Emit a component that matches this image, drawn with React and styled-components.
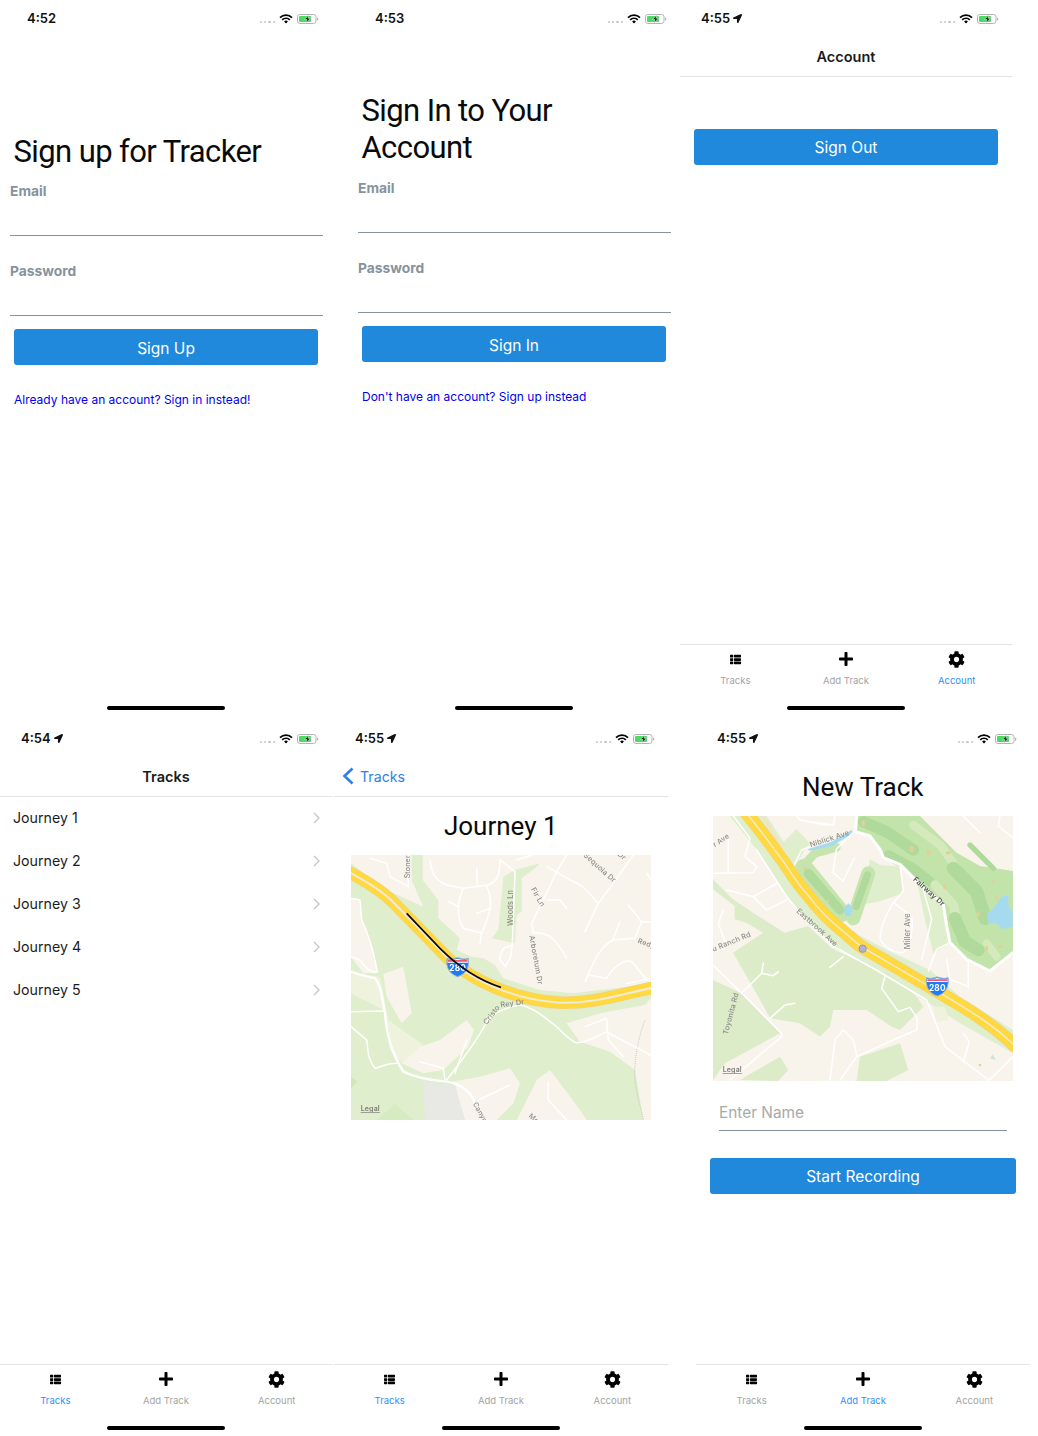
import React from 'react';
import styled, { createGlobalStyle } from 'styled-components';
import { FaThList, FaPlus, FaCog, FaLocationArrow } from 'react-icons/fa';

const GlobalStyle = createGlobalStyle`
  html, body {
    margin: 0;
    padding: 0;
    background: #fff;
  }
  body {
    font-family: Inter, "Liberation Sans", sans-serif;
    color: #000;
    overflow: hidden;
  }
`;

const Page = styled.div`
  width: 1038px;
  height: 1436px;
  display: flex;
  flex-direction: column;
  gap: 4px;
`;

const Row = styled.div`
  display: flex;
  align-items: flex-start;
`;

const Phone = styled.div`
  width: ${(p) => p.$width}px;
  height: 716px;
  margin-left: ${(p) => p.$left || 0}px;
  display: flex;
  flex-direction: column;
  flex-shrink: 0;
`;

const Body = styled.div`
  flex: 1;
  display: flex;
  flex-direction: column;
  min-height: 0;
`;

/* status bar */
const StatusBar = styled.div`
  height: 36px;
  display: flex;
  align-items: center;
  justify-content: space-between;
  padding: 0 13px 0 ${(p) => p.$left}px;
  flex-shrink: 0;
`;

const Time = styled.div`
  display: flex;
  align-items: center;
  gap: 3px;
  font-size: 13px;
  font-weight: 600;
  color: #111;
`;

const StatusIcons = styled.div`
  display: flex;
  align-items: center;
  margin-top: 1px;
`;

const Dots = styled.div`
  display: flex;
  gap: 1.800px;
  margin: 7px 4px 0 0;
`;

const Dot = styled.span`
  width: 2.500px;
  height: 2.500px;
  border-radius: 50%;
  background: #c4c4c4;
`;

const Wifi = () => (
  <svg width="14" height="10" viewBox="0 0 14 10" style={{ marginRight: 4 }}>
    <path d="M1 3.6a8.6 8.6 0 0 1 12 0" fill="none" stroke="#000" strokeWidth="1.700" />
    <path d="M3.2 5.8a5.400 5.400 0 0 1 7.600 0" fill="none" stroke="#000" strokeWidth="1.700" />
    <path d="M5.100 7.500a2.700 2.700 0 0 1 3.800 0L7 9.600z" fill="#000" />
  </svg>
);

const Battery = () => (
  <svg width="22" height="10" viewBox="0 0 22 10">
    <rect x="0.500" y="0.500" width="18.500" height="9" rx="2.400" fill="#fff" stroke="#b4b4b4" />
    <rect x="2" y="2" width="12" height="6" rx="1" fill="#4cd964" />
    <path d="M20 3.400c1 .2 1.400.8 1.400 1.600s-.4 1.400-1.400 1.600z" fill="#b5b5b5" />
    <path d="M11.800 0.800L7.700 5.600h2.300l-.9 3.600 4.200-5h-2.400z" fill="#111" stroke="#fff" strokeWidth="0.500" />
  </svg>
);

const Status = ({ time, located, left }) => (
  <StatusBar $left={left}>
    <Time>
      {time}
      {located && <FaLocationArrow size={9} />}
    </Time>
    <StatusIcons>
      <Dots>
        <Dot />
        <Dot />
        <Dot />
        <Dot />
      </Dots>
      <Wifi />
      <Battery />
    </StatusIcons>
  </StatusBar>
);

/* nav header */
const Header = styled.div`
  height: 40px;
  display: flex;
  align-items: center;
  justify-content: ${(p) => (p.$back ? 'flex-start' : 'center')};
  border-bottom: 1px solid #e4e4e4;
  flex-shrink: 0;
`;

const HeaderTitle = styled.div`
  font-size: 14.500px;
  font-weight: 600;
  color: #1a1a1a;
`;

const BackLink = styled.div`
  display: flex;
  align-items: center;
  gap: 6px;
  margin-left: 8px;
  font-size: 14.200px;
  color: #2f7fe8;
`;

/* forms */
const Title = styled.div`
  margin: ${(p) => p.$top}px 14px ${(p) => p.$bottom || 0}px 13.500px;
  font-family: Roboto, Inter, sans-serif;
  font-size: ${(p) => p.$size || 31}px;
  line-height: 37px;
  letter-spacing: ${(p) => (p.$center ? 0 : -0.6)}px;
  text-align: ${(p) => (p.$center ? 'center' : 'left')};
  color: #0a0a0a;
`;

const Field = styled.div`
  box-sizing: border-box;
  height: 54px;
  margin: 0 9px 26px 10px;
  border-bottom: 1px solid #86939e;
`;

const Label = styled.div`
  font-size: 13.800px;
  line-height: 18px;
  font-weight: 700;
  color: #86939e;
`;

const Button = styled.div`
  box-sizing: border-box;
  height: 36px;
  margin: ${(p) => p.$top}px 14px 0;
  padding-top: ${(p) => p.$nudge || 0}px;
  display: flex;
  align-items: center;
  justify-content: center;
  background: #2089dc;
  border-radius: 3px;
  color: #fff;
  font-size: 15.500px;
`;

const TextLink = styled.div`
  margin: 26px 14px 0;
  font-size: 12px;
  line-height: 18px;
  color: #0000ee;
`;

const NameInput = styled.div`
  height: 35px;
  margin: 15px 23px 27px;
  box-sizing: border-box;
  padding-top: 7px;
  border-bottom: 1px solid #86939e;
  font-size: 15.400px;
  line-height: 20px;
  color: #a9a9a9;
`;

/* list */
const ListRow = styled.div`
  box-sizing: border-box;
  height: 43px;
  display: flex;
  align-items: center;
  justify-content: space-between;
  padding: 0 12px 2px 13px;
  font-size: 14.200px;
  color: #1c1c1c;
`;

const Chevron = () => (
  <svg width="7" height="12" viewBox="0 0 7 12">
    <path d="M1 1l5 5-5 5" fill="none" stroke="#c5c5c8" strokeWidth="1.300" />
  </svg>
);

/* maps */
const MapFrame = styled.svg`
  display: block;
  width: 300px;
  height: 265px;
  margin-left: 17px;
  flex-shrink: 0;
  background: #f8f4ec;
  filter: blur(0.35px);
`;

const Road = styled.path`
  fill: none;
  stroke: #fff;
  stroke-width: ${(p) => p.$w || 4.500}px;
  stroke-linecap: round;
  stroke-linejoin: round;
`;

const Fairway = styled.path`
  fill: none;
  stroke: ${(p) => p.$color || '#b0da9c'};
  stroke-width: ${(p) => p.$w || 26}px;
  stroke-linecap: round;
  stroke-linejoin: round;
`;

const MapText = styled.text`
  font-family: Inter, "Liberation Sans", sans-serif;
  font-size: ${(p) => p.$size || 21}px;
  font-weight: ${(p) => p.$weight || 500};
  fill: ${(p) => p.$color || '#8c8c88'};
  letter-spacing: 0.500px;
`;

const HIGHWAY_A =
  'M20,62 C70,90 125,120 165,162 L325,326 C400,392 520,450 660,458 C760,462 850,430 945,412';
const HIGHWAY_B =
  'M130,-5 L146,18 C190,70 220,115 249,153 C275,190 295,225 322,253 C350,290 385,328 417,353 C445,375 465,398 489,413 L680,525 C770,580 860,625 950,712';

const Highway = ({ d, width, stripe }) => (
  <g fill="none">
    <path d={d} stroke="#f4cf83" strokeWidth={width + 4} />
    <path d={d} stroke="#ffd93d" strokeWidth={width} />
    <path d={d} stroke="#efeadb" strokeWidth={stripe} />
  </g>
);

const Shield = ({ x, y }) => (
  <g transform={`translate(${x} ${y})`}>
    <path
      d="M2 3 C14 8 24 3 34 1 C44 3 54 8 66 3 C70 28 60 50 34 58 C8 50 -2 28 2 3z"
      fill="#1f7bf2"
      stroke="#9bb0d0"
      strokeWidth="3"
    />
    <path d="M4 6 C14 10 24 6 34 4 C44 6 54 10 64 6 L65 16 L3 16z" fill="#fff" />
    <path d="M5 8 L63 8 L64 13 L4 13z" fill="#f0566a" />
    <MapText x="34" y="42" $size={25} $weight={700} $color="#fff" textAnchor="middle">
      280
    </MapText>
  </g>
);

const JourneyMap = () => (
  <MapFrame viewBox="33 15 900 795">
    <path
      d="M215,15 L248,15 L248,90 L295,150 L295,205 L360,265 L350,300 L395,320 L430,325 L465,345 L490,385 L600,420 L700,430 L860,410 L933,395 L933,445 L915,465 L780,490 L680,520 L720,575 L810,605 L885,660 L910,810 L33,810 L33,40 L130,115 L205,150 L250,170 L215,90z"
      fill="#dfeecd"
    />
    <path d="M490,80 L525,60 L600,40 L585,55 L545,85 L545,185 L530,195 L525,280 L455,265 L475,240z" fill="#dfeecd" />
    <path d="M33,145 L60,150 L65,210 L100,300 L115,370 L70,370 L33,320z" fill="#f8f4ec" />
    <path d="M33,370 L120,380 L145,510 L250,585 L185,640 L150,600 L130,480 L33,430z" fill="#eff2dd" />
    <path d="M130,372 L190,350 L215,490 L185,520 L140,440z" fill="#f8f4ec" />
    <path d="M185,640 L240,590 L300,570 L380,510 L402,540 L385,590 L310,660 L250,670z" fill="#f8f4ec" />
    <path d="M335,695 L420,680 L510,655 L540,700 L520,760 L470,810 L375,810z" fill="#f8f4ec" />
    <path d="M530,810 L590,690 L630,660 L660,700 L720,780 L740,810z" fill="#f8f4ec" />
    <path d="M250,695 L345,705 L375,810 L255,810z" fill="#e8e8e4" />
    <path d="M33,680 L52,695 L33,715z" fill="#cfe8b6" />
    <path d="M110,810 L165,762 L220,810z" fill="#d7ebc2" />
    <path
      d="M915,510 C895,560 880,640 885,690 C890,740 905,780 910,810"
      fill="none"
      stroke="#b5b5ae"
      strokeWidth="2"
      strokeDasharray="3 3"
    />

    <Road d="M33,365 C60,375 85,380 105,385 C125,410 125,440 135,490 C140,550 150,600 190,665 C220,680 260,690 320,695 C350,700 390,715 405,760" $w={7} />
    <Road d="M33,530 L80,570 C85,610 85,630 105,655 C125,650 135,640 170,640" />
    <Road d="M33,485 L135,483" />
    <Road d="M33,145 L60,150 L65,210 C85,250 100,300 112,365 C90,372 70,345 60,330 L33,320" />
    <Road d="M320,690 C350,650 400,590 435,525 C450,495 480,475 540,465 C570,470 600,490 650,530 C680,560 700,578 710,578 C740,578 770,560 800,545 C840,570 890,590 930,615" />
    <Road d="M240,635 L310,655 L315,690" />
    <Road d="M345,670 L380,570" />
    <Road d="M415,750 L510,705" />
    <Road d="M625,695 L625,750 L680,810" />
    <Road d="M800,510 L805,570 L850,620" />
    <Road d="M735,530 L800,505" />
    <Road d="M90,25 L140,40 L150,80 L205,110 L205,15" />
    <Road d="M270,30 C275,70 285,90 320,105 L370,115 L445,105 C470,95 480,75 480,30 M410,55 L412,105" />
    <Road d="M370,115 C355,150 345,190 370,235 L425,250 C445,200 465,160 440,110 M325,155 L355,170 M410,190 L450,175 M425,250 L420,280" />
    <Road d="M480,30 L525,65 L517,285 L490,295 L478,325 L495,350 L512,320 L517,285" />
    <Road d="M530,30 L590,10 M680,15 L650,65 C630,110 610,150 575,220 L580,250 C610,245 640,250 680,325 M620,50 L700,95 C720,100 735,115 775,160 L735,245 M775,160 L820,100 L880,15 M620,150 L660,150 L680,175" />
    <Road d="M865,165 L905,215 L933,215 M905,215 L885,265 L820,270 C790,285 770,310 735,395 L745,375 L800,385 C820,350 860,320 880,340 L920,390 M840,215 L818,270 M920,70 L933,90" />
    <Road d="M860,400 L933,385" $w={4} />

    <Highway d={HIGHWAY_A} width={34} stripe={6} />
    <Shield x={319} y={322} />
    <path d="M200,190 L300,295 C345,340 400,385 483,412" fill="none" stroke="#0a0a0a" strokeWidth="5" />

    <MapText transform="translate(210 85) rotate(-90)">Stoner</MapText>
    <MapText transform="translate(518 228) rotate(-90)" $size={22}>Woods Ln</MapText>
    <MapText transform="translate(572 118) rotate(60)" $size={22}>Fir Ln</MapText>
    <MapText transform="translate(568 258) rotate(80)" $size={22}>Arboretum Dr</MapText>
    <MapText transform="translate(730 18) rotate(42)" $size={22}>Sequoia Dr</MapText>
    <MapText transform="translate(832 15) rotate(42)">Dr</MapText>
    <MapText transform="translate(892 278) rotate(20)">Redy</MapText>
    <MapText transform="translate(440 525) rotate(-52)" $size={22}>Cristo</MapText>
    <MapText transform="translate(482 472) rotate(-8)" $size={22}>Rey Dr</MapText>
    <MapText transform="translate(398 762) rotate(60)">Canyo</MapText>
    <MapText transform="translate(565 800) rotate(40)">Mo</MapText>
    <MapText x="62" y="783" $weight={600} $color="#7d7d7a" textDecoration="underline">
      Legal
    </MapText>
  </MapFrame>
);

const NewTrackMap = () => (
  <MapFrame viewBox="39 18 900 795">
    <path d="M89,18 L200,18 L300,170 L340,240 L440,355 L560,420 L690,480 L780,560 L939,660 L939,730 L780,640 L680,575 L534,483 L399,408 L299,308 L259,258 L169,118z" fill="#dfeecd" />
    <path d="M239,108 L289,58 L329,98 L284,168z" fill="#dfeecd" />
    <path d="M39,208 L99,268 L159,308 L254,368 L324,348 L394,413 L534,483 L570,490 L650,560 L670,590 L600,660 L575,650 L500,600 L400,600 L390,650 L360,680 L300,640 L210,625 L175,560 L99,428 L189,368 L139,338 L104,328 L104,288 L39,238z" fill="#dcecc9" />
    <path d="M39,510 L125,550 L240,670 L75,760 L39,810z" fill="#dcecc9" />
    <path d="M480,740 L600,700 L625,780 L560,813 L470,813z" fill="#dcecc9" />
    <path d="M120,810 L240,740 L265,780 L235,813z" fill="#dcecc9" />
    <path d="M700,590 L735,590 L745,630 L710,635z" fill="#eff2dd" />
    <path d="M510,148 L540,165 L600,170 L610,250 L535,275 L480,285z" fill="#dfeecd" />
    <path d="M650,208 L730,288 L750,400 L700,430 L675,330z" fill="#dfeecd" />

    <path
      d="M466,18 L465,65 L510,78 L540,118 L550,143 L600,163 L640,203 L730,283 L740,348 L750,398 L800,448 L870,483 L939,428 L939,183 L840,168 L770,128 L710,68 L660,18z"
      fill="#c2e3aa"
    />
    <Fairway d="M490,35 L560,65 L640,120" $w={34} />
    <Fairway d="M640,45 L720,105 L775,180" $color="#d4e9bc" $w={26} />
    <Fairway d="M565,135 L640,175 L690,215" $w={30} />
    <Fairway d="M760,175 L830,245 L855,325" $w={40} />
    <Fairway d="M705,225 L760,285 L780,370" $color="#d4e9bc" $w={28} />
    <Fairway d="M765,325 L795,395 L835,420" $w={38} />
    <Fairway d="M810,105 L880,175" $w={16} />
    <Fairway d="M860,400 L890,440" $color="#d4e9bc" $w={24} />

    <Fairway d="M312,172 L425,310" $color="#c6e5ae" $w={52} />
    <Fairway d="M505,190 L460,325" $color="#c6e5ae" $w={42} />
    <Fairway d="M312,165 L345,130 L409,112" $color="#c6e5ae" $w={26} />
    <Fairway d="M325,190 L420,300" $w={28} />
    <Fairway d="M502,195 L468,290" $w={22} />
    <path d="M433,295 L445,280 L458,295 L452,318 L435,318z" fill="#a6dbef" />
    <path d="M905,260 L925,255 L925,285 L938,310 L938,350 L905,358 L890,340 L865,340 L862,310 L880,295z" fill="#a6dbef" />
    <path d="M322,118 L395,95 L455,60 L460,70 L395,108 L330,122z" fill="#a6dbef" />

    <g fill="#e4cf97">
      <ellipse cx="490" cy="40" rx="5" ry="9" />
      <ellipse cx="635" cy="118" rx="6" ry="10" />
      <ellipse cx="685" cy="128" rx="6" ry="9" />
      <ellipse cx="745" cy="128" rx="8" ry="5" />
      <ellipse cx="735" cy="230" rx="5" ry="8" />
      <ellipse cx="835" cy="312" rx="5" ry="9" />
      <ellipse cx="890" cy="265" rx="4" ry="7" />
      <ellipse cx="860" cy="415" rx="5" ry="8" />
      <ellipse cx="900" cy="410" rx="7" ry="5" />
      <ellipse cx="315" cy="175" rx="6" ry="4" />
      <ellipse cx="383" cy="272" rx="4" ry="5" />
      <ellipse cx="880" cy="215" rx="4" ry="5" />
      <ellipse cx="840" cy="765" rx="4" ry="4" />
    </g>
    <path d="M870,745 L878,733 L888,750z" fill="#d2e3de" />

    <Road d="M470,18 L466,65 L510,78 L540,118 L550,143 L600,163 L640,203 L730,283 L740,348 L750,398 L800,448 L870,483 L939,428" $w={9} />
    <Road d="M600,163 L610,243 L580,278 C555,320 540,360 540,388 C560,420 590,428 610,428 C635,400 640,350 635,318 L580,278" />
    <Road d="M670,238 L695,328 L665,448" />
    <Road d="M750,398 L710,418 L685,483" />
    <Road d="M740,448 L750,508 L805,530 L805,448" />
    <Road d="M330,35 L400,45 L405,18 M459,68 L409,118 L399,188 L429,213 L464,143" />
    <Road d="M100,18 L150,85 L135,140 L170,170 L160,188 L39,190 M85,90 L85,188" />
    <Road d="M169,118 L259,258 L299,308 L399,408 L534,483 L680,570 L735,710 L865,810" />
    <Road d="M80,240 L160,260 L200,300 L260,270 M160,260 L230,220" />
    <Road d="M39,465 L125,550 L245,670 L245,680 L90,810" />
    <Road d="M125,550 L185,490 L190,460 M185,490 L220,497 L235,485" />
    <Road d="M210,625 L255,585 L285,580" />
    <Road d="M70,300 L55,340 L75,395" />
    <Road d="M390,472 L430,440" />
    <Road d="M555,500 L545,535 L595,605 L630,592 L652,625 L650,660 L580,690 L470,740 L420,810" />
    <Road d="M470,735 L460,690 L430,660 L405,690 L390,810" />
    <Road d="M790,670 L808,695 L790,755" />
    <Road d="M900,18 L895,48 L939,83 M790,18 L840,68 M865,813 L939,740" />
    <Road d="M290,18 L300,30 L380,45 M280,170 L305,120 L330,110" />

    <path d="M189,18 L259,138" fill="none" stroke="#fbe0b4" strokeWidth="5" />
    <Highway d={HIGHWAY_B} width={36} stripe={4} />
    <circle cx="488" cy="416" r="11" fill="#b4b0cf" stroke="#8794e2" strokeWidth="3" />
    <Shield x={678} y={500} />

    <MapText transform="translate(45 112) rotate(-35)">r Ave</MapText>
    <MapText transform="translate(332 112) rotate(-18)" $size={22}>Niblick Ave</MapText>
    <MapText transform="translate(638 210) rotate(42)" $weight={600} $color="#55554f" $size={22}>
      Fairway Dr
    </MapText>
    <MapText transform="translate(630 418) rotate(-90)" $size={22}>Miller Ave</MapText>
    <MapText transform="translate(288 305) rotate(42)" $size={22}>Eastbrook Ave</MapText>
    <MapText transform="translate(40 425) rotate(-22)" $size={22}>u Ranch Rd</MapText>
    <MapText transform="translate(83 675) rotate(-75)" $size={22}>Toyonita Rd</MapText>
    <MapText x="68" y="786" $weight={600} $color="#7d7d7a" textDecoration="underline">
      Legal
    </MapText>
  </MapFrame>
);

/* tab bar */
const TabBar = styled.div`
  height: 62px;
  box-sizing: border-box;
  border-top: 1px solid #e4e4e4;
  display: flex;
  flex-shrink: 0;
`;

const Tab = styled.div`
  flex: 1;
  display: flex;
  flex-direction: column;
  align-items: center;
  color: ${(p) => (p.$active ? '#2f8ffb' : '#a3a3a3')};
  font-size: 9.500px;
  line-height: 12px;
`;

const TabIcon = styled.div`
  height: 28px;
  margin-bottom: 2px;
  display: flex;
  align-items: center;
  color: #000;
`;

const HomeRow = styled.div`
  height: 10px;
  display: flex;
  justify-content: center;
  align-items: flex-start;
  flex-shrink: 0;
`;

const HomeBar = styled.div`
  width: 118px;
  height: 4px;
  border-radius: 2px;
  background: #000;
`;

const Tabs = ({ active }) => (
  <TabBar>
    <Tab $active={active === 'tracks'}>
      <TabIcon>
        <FaThList size={11} />
      </TabIcon>
      Tracks
    </Tab>
    <Tab $active={active === 'add'}>
      <TabIcon>
        <FaPlus size={16} />
      </TabIcon>
      Add Track
    </Tab>
    <Tab $active={active === 'account'}>
      <TabIcon>
        <FaCog size={17} />
      </TabIcon>
      Account
    </Tab>
  </TabBar>
);

const Home = () => (
  <HomeRow>
    <HomeBar />
  </HomeRow>
);

const AuthForm = ({ titleLines, top, bottom, button, link }) => (
  <Body>
    <Title $top={top} $bottom={bottom}>
      {titleLines.map((line) => (
        <div key={line}>{line}</div>
      ))}
    </Title>
    <Field>
      <Label>Email</Label>
    </Field>
    <Field>
      <Label>Password</Label>
    </Field>
    <Button $top={-13} $nudge={2}>{button}</Button>
    <TextLink>{link}</TextLink>
  </Body>
);

const journeys = ['Journey 1', 'Journey 2', 'Journey 3', 'Journey 4', 'Journey 5'];

export default function App() {
  return (
    <Page>
      <GlobalStyle />
      <Row>
        <Phone $width={332}>
          <Status time="4:52" left={27} />
          <AuthForm
            titleLines={['Sign up for Tracker']}
            top={97}
            bottom={12}
            button="Sign Up"
            link="Already have an account? Sign in instead!"
          />
          <Home />
        </Phone>
        <Phone $width={332} $left={16}>
          <Status time="4:53" left={27} />
          <AuthForm
            titleLines={['Sign In to Your', 'Account']}
            top={56}
            bottom={13}
            button="Sign In"
            link="Don't have an account? Sign up instead"
          />
          <Home />
        </Phone>
        <Phone $width={332}>
          <Status time="4:55" located left={21} />
          <Header>
            <HeaderTitle>Account</HeaderTitle>
          </Header>
          <Body>
            <Button $top={52}>Sign Out</Button>
          </Body>
          <Tabs active="account" />
          <Home />
        </Phone>
      </Row>
      <Row>
        <Phone $width={332}>
          <Status time="4:54" located left={21} />
          <Header>
            <HeaderTitle>Tracks</HeaderTitle>
          </Header>
          <Body>
            {journeys.map((name) => (
              <ListRow key={name}>
                {name}
                <Chevron />
              </ListRow>
            ))}
          </Body>
          <Tabs active="tracks" />
          <Home />
        </Phone>
        <Phone $width={334} $left={2}>
          <Status time="4:55" located left={21} />
          <Header $back>
            <BackLink>
              <svg width="12" height="18" viewBox="0 0 12 18">
                <path d="M10.500 1.500L2.500 9l8 7.500" fill="none" stroke="#2f7fe8" strokeWidth="2.600" />
              </svg>
              Tracks
            </BackLink>
          </Header>
          <Body>
            <Title $top={11} $bottom={10} $size={26} $center>
              Journey 1
            </Title>
            <JourneyMap />
          </Body>
          <Tabs active="tracks" />
          <Home />
        </Phone>
        <Phone $width={334} $left={28}>
          <Status time="4:55" located left={21} />
          <Body>
            <Title $top={13} $bottom={10} $size={26} $center>
              New Track
            </Title>
            <NewTrackMap />
            <NameInput>Enter Name</NameInput>
            <Button $top={0}>Start Recording</Button>
          </Body>
          <Tabs active="add" />
          <Home />
        </Phone>
      </Row>
    </Page>
  );
}
